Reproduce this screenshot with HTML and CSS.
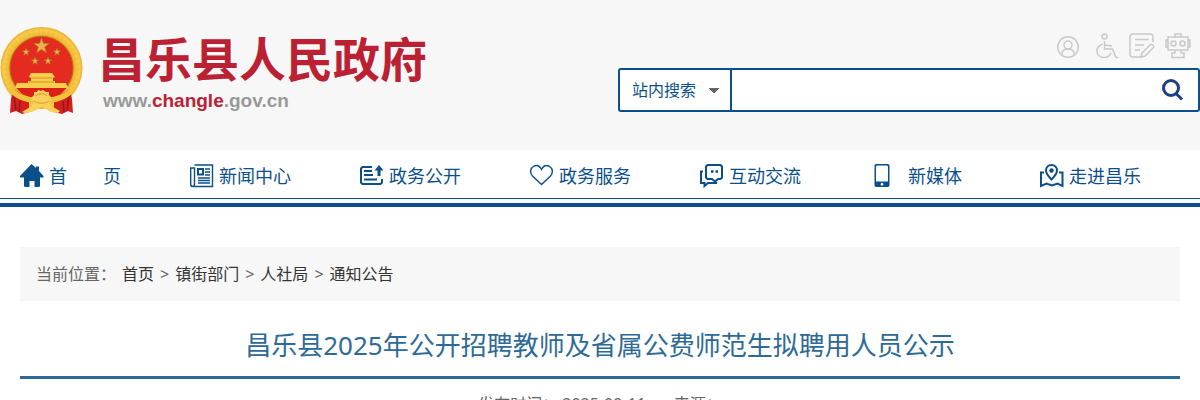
FILE: index.html
```html
<!DOCTYPE html>
<html lang="zh-CN">
<head>
    <meta charset="UTF-8">
    <meta name="viewport" content="width=device-width, initial-scale=1.0">
    <title>昌乐县2025年公开招聘教师及省属公费师范生拟聘用人员公示</title>
    <link rel="stylesheet" href="styles.css">
</head>
<body>

    <header class="header">
        <a class="logo" href="#">
            <svg class="emblem" viewBox="0 0 84 88" aria-hidden="true">
                <defs>
                    <radialGradient id="gold" cx="50%" cy="50%" r="50%">
                        <stop offset="76%" stop-color="#d9961a"/>
                        <stop offset="82%" stop-color="#f3be38"/>
                        <stop offset="92%" stop-color="#f9d04e"/>
                        <stop offset="100%" stop-color="#e9ae2c"/>
                    </radialGradient>
                    <polygon id="star" points="0,-10 2.4,-3.1 9.5,-3.1 3.8,1.2 5.9,8.1 0,4 -5.9,8.1 -3.8,1.2 -9.5,-3.1 -2.4,-3.1"/>
                </defs>
                <circle cx="41.500" cy="41" r="41" fill="url(#gold)"/>
                <circle cx="41.500" cy="41" r="36" fill="none" stroke="#e2a62b" stroke-width="4" stroke-dasharray="3 2" opacity=".2"/>
                <circle cx="41.500" cy="41" r="31.500" fill="#e52b20" stroke="#b9641a"/>
                <path d="M16 60h51c-6 9-15 12-25.500 12S22 69 16 60z" fill="#dc2018"/>
                <g fill="#e8b04a" stroke="#a95c18" stroke-width=".6">
                    <use href="#star" transform="translate(41.500 19) scale(.85)"/>
                    <use href="#star" transform="translate(26 25) scale(.42)" stroke-width="1.200"/>
                    <use href="#star" transform="translate(57 25) scale(.42)" stroke-width="1.200"/>
                    <use href="#star" transform="translate(35 34) scale(.42)" stroke-width="1.200"/>
                    <use href="#star" transform="translate(48 34) scale(.42)" stroke-width="1.200"/>
                </g>
                <path d="M31 46h21l3 4-2 1v3h2v2h11l2 5H15l2-5h11v-2h3v-3l-2-1z" fill="#f8cf4c"/>
                <path d="M31 51h21M29 55h25" stroke="#d98c22" stroke-width="1"/>
                <path d="M13 62L11 72 10 86l6-2 6 3 7-2v-14zM70 62l2 10 1 14-5-2-6 3-8-2v-14z" fill="#d3201d"/>
                <path d="M14 69l2 14M20 74l-1 11M63 74l1 11M69 69l-2 14" stroke="#99131a" stroke-width="1.500"/>
                <path d="M10 59c8 8 17 11 26 12l-2 5C22 75 13 70 7 63zM73 59c-8 8-17 11-26 12l2 5c12-1 21-6 27-13z" fill="#f4c13a"/>
                <path d="M34 65l3 0 1-2 3 1 2-1 3 2 3 0 0 3 3 3-3 4 2 4 9 5-2 2c-7 0-11-3-16-7-5 4-10 7-17 7l-3-1 10-6 2-4-3-4 3-3z" fill="#f9d15a"/>
                <path d="M36 69c2-3 9-3 11 0M34 74c4 3 11 3 15 0" stroke="#d7972a" fill="none"/>
            </svg>
            <span class="logo-text">
                <strong class="logo-name">昌乐县人民政府</strong>
                <span class="logo-url">www.<b>changle</b>.gov.cn</span>
            </span>
        </a>

        <div class="tools">
            <div class="tool-links">
                <a href="#" aria-label="个人中心">
                    <svg class="tool-icon" viewBox="0 0 26 26">
                        <circle cx="11" cy="14" r="10.300"/>
                        <circle cx="11" cy="12" r="4"/>
                        <path d="M5 21c0-3 2-5 6-5s6 2 6 5"/>
                    </svg>
                </a>
                <a href="#" aria-label="无障碍">
                    <svg class="tool-icon" viewBox="0 0 26 26">
                        <circle cx="11.500" cy="3.500" r="2.500"/>
                        <path d="M11.500 8v8h8l3.500 8.500h2.500M12 12l7 1M9.500 11C6 12.500 4 15 4 18c0 4 3 6.500 7 6.500 3.500 0 6-2 7-5"/>
                    </svg>
                </a>
                <a href="#" aria-label="留言">
                    <svg class="tool-icon" viewBox="0 0 26 26">
                        <path d="M24 9V4c0-2-1-3-3-3H4C2 1 1 2 1 4v17c0 2 1 3 3 3h9M6 6.500h14M6 12h9M6 17h5"/>
                        <path d="M13 20l8-8c1-1 2-1 3 0s1 2 0 3l-8 8-4 1z"/>
                    </svg>
                </a>
                <a href="#" aria-label="智能问答">
                    <svg class="tool-icon" viewBox="0 0 26 26">
                        <path d="M10 4V1h6v3M3 4h20v13H3zM3 7H1v7h2M23 7h2v7h-2M10 17v3H7v4.500h12V20h-3v-3"/>
                        <circle cx="8.500" cy="10.500" r="2.500"/>
                        <circle cx="17.500" cy="10.500" r="2.500"/>
                    </svg>
                </a>
            </div>

            <form class="search">
                <select class="search-type" aria-label="搜索范围">
                    <option>站内搜索</option>
                </select>
                <input class="search-input" type="text" aria-label="搜索">
                <button class="search-btn" type="button" aria-label="搜索">
                    <svg viewBox="0 0 24 24" aria-hidden="true">
                        <circle cx="10" cy="10" r="7.500"/>
                        <path d="M15 15.500l6 6"/>
                    </svg>
                </button>
            </form>
        </div>
    </header>

    <nav class="nav">
        <a class="nav-item" href="#">
            <svg class="nav-icon" viewBox="0 0 24 24">
                <path class="solid" d="M11.500 0L16 4V2.500h3V7l4.500 5v1.500H20V22l-1 1h-4.500v-6h-5v6H5l-1-1v-8.500H0V12z"/>
            </svg>
            <span class="nav-text">首&emsp;&emsp;页</span>
        </a>
        <a class="nav-item" href="#">
            <svg class="nav-icon thin" viewBox="0 0 24 24">
                <path d="M4.500 1h18v21.500h-20C1 22.500.7 22 .7 20V4h3.800v16c0 1.500-.5 2.500-2 2.500M15 5h5M15 8h5M15 11h5M8 14h12M8 16.500h12M8 19h12"/>
                <path d="M8 5h5v5.500H8z" stroke-width="2"/>
            </svg>
            <span class="nav-text">新闻中心</span>
        </a>
        <a class="nav-item" href="#">
            <svg class="nav-icon" viewBox="0 0 24 24">
                <path d="M12 3H2.500L1 4.500v14L2.500 20h18l1.500-1.500V15M4 7h8M4 11h9M4 15.500h13"/>
                <path class="solid" d="M19 1l4.500 5.500h-3V12h-3V6.500h-3z"/>
            </svg>
            <span class="nav-text">政务公开</span>
        </a>
        <a class="nav-item" href="#">
            <svg class="nav-icon thin" viewBox="0 0 24 24">
                <path d="M11.500 20.500L2.500 12C-.5 8.500.3 4 4 2 7.500.500 10 2.500 11.500 5.500 13 2.500 15.500.500 19 2c3.700 2 4.500 6.500 1.500 10z"/>
            </svg>
            <span class="nav-text">政务服务</span>
        </a>
        <a class="nav-item" href="#">
            <svg class="nav-icon" viewBox="0 0 24 24">
                <path d="M7.500 1h13l1.500 1.500v11L20.500 15H18l-3 2.500-3-2.500H7.500L6 13.500v-11z"/>
                <path d="M3 7.500H1V19h3.500v3L8 19h8v-1"/>
                <path d="M11 7.500h2.500M15.500 7.500H18" stroke-width="2.500"/>
            </svg>
            <span class="nav-text">互动交流</span>
        </a>
        <a class="nav-item" href="#">
            <svg class="nav-icon" viewBox="0 0 24 24">
                <path class="solid" fill-rule="evenodd" d="M6.500 0h11c1.500 0 2 .7 2 2v19c0 1.300-.5 2-2 2h-11c-1.500 0-2-.7-2-2V2c0-1.300.5-2 2-2zM6 2.500V17.500h12V2.500L17 1.500H7zM12 18.500l-1.700 1.700L12 22l1.700-1.800z"/>
            </svg>
            <span class="nav-text">新媒体</span>
        </a>
        <a class="nav-item" href="#">
            <svg class="nav-icon" viewBox="0 0 24 24">
                <path d="M4 8.500H1V22l5.500-2.500L12 21.500l5.500-2L22.500 22V8.500H19"/>
                <path d="M11.500 15.500C8 12 6 9.500 6 6.500 6 3 8.500 1 11.500 1S17 3 17 6.500c0 3-2 5.500-5.500 9z"/>
                <circle class="solid" cx="11.500" cy="6.500" r="2.200"/>
            </svg>
            <span class="nav-text">走进昌乐</span>
        </a>
    </nav>

    <main class="content">
        <div class="breadcrumb">
            <span class="breadcrumb-label">当前位置：</span>
            <a href="#">首页</a>
            <span>&gt;</span>
            <a href="#">镇街部门</a>
            <span>&gt;</span>
            <a href="#">人社局</a>
            <span>&gt;</span>
            <a href="#">通知公告</a>
        </div>
        <h1 class="title">昌乐县2025年公开招聘教师及省属公费师范生拟聘用人员公示</h1>
        <p class="meta">
            <span>发布时间： 2025-09-11</span>
            <span>来源：</span>
        </p>
    </main>

</body>
</html>
```

FILE: styles.css
```css
* {
    box-sizing: border-box;
}

html {
    scrollbar-width: none;
}

body {
    margin: 0;
    background-color: #fff;
    color: #666;
    font-family: "Noto Sans", "Noto Sans CJK SC", sans-serif;
    font-size: 16px;
}

a {
    color: inherit;
    text-decoration: none;
}

svg {
    display: block;
    fill: none;
}

/* Header */
.header {
    display: flex;
    justify-content: space-between;
    align-items: flex-start;
    min-height: 150px;
    background-color: #f7f7f7;
}

.logo {
    display: flex;
    gap: 14px;
    padding-top: 27px;
}

.emblem {
    width: 84px;
    height: 88px;
}

.logo-text {
    display: flex;
    flex-direction: column;
    padding-top: 6px;
}

.logo-name {
    color: #bb2133;
    font-size: 47px;
    font-weight: 700;
    line-height: 52px;
}

.logo-url {
    padding: 4px 0 0 5px;
    color: #999;
    font-family: "Liberation Sans", sans-serif;
    font-size: 19px;
    font-weight: 700;
    line-height: 24px;
}

.logo-url b {
    color: #bb2133;
}

.tools {
    width: 48.5%;
    padding-top: 33px;
}

.tool-links {
    display: flex;
    justify-content: flex-end;
    gap: 10px;
    height: 35px;
    padding-right: 9px;
}

.tool-icon {
    width: 26px;
    height: 26px;
    stroke: #c9c9c9;
    stroke-width: 1.5;
}

.search {
    display: flex;
    height: 44px;
    border: 2px solid #0a4f8c;
    border-radius: 3px;
    background-color: #fff;
}

.search-type {
    appearance: none;
    width: 112px;
    padding: 0 12px;
    border: none;
    border-right: 2px solid #0a4f8c;
    background-image: linear-gradient(to bottom left, #666 50%, transparent 50%),
                      linear-gradient(to bottom right, #666 50%, transparent 50%);
    background-color: transparent;
    background-position: 89px 18px, 94px 18px;
    background-size: 5px 6px;
    background-repeat: no-repeat;
    color: #0a4f8c;
    font: inherit;
}

.search-input {
    flex: 1;
    min-width: 0;
    padding: 0 10px;
    border: none;
    background: none;
    font: inherit;
    outline: none;
}

.search-btn {
    width: 50px;
    padding: 0 13px;
    border: none;
    background: none;
    cursor: pointer;
}

.search-btn svg {
    width: 24px;
    height: 24px;
    stroke: #1c3f82;
    stroke-width: 3;
}

/* Navigation */
.nav {
    display: grid;
    grid-template-columns: repeat(7, 1fr);
    gap: 30px;
    height: 57px;
    padding: 0 20px;
    border-bottom: 4px solid #0a4f8c;
    background: linear-gradient(#0a4f8c, #0a4f8c) 0 48px / 100% 1px no-repeat;
}

.nav-item {
    display: flex;
    gap: 5px;
    padding-top: 14px;
    color: #0a4f8c;
    font-size: 18px;
    line-height: 24px;
    white-space: nowrap;
}

.nav-icon {
    flex: none;
    width: 24px;
    height: 24px;
    stroke: #0a4f8c;
    stroke-width: 2;
}

.nav-icon.thin {
    stroke-width: 1.4;
}

.nav-icon .solid {
    fill: #0a4f8c;
    stroke: none;
}

.nav-text {
    min-width: 72px;
    text-align: center;
}

/* Article */
.content {
    padding: 40px 20px 0;
}

.breadcrumb {
    display: flex;
    gap: 6px;
    padding: 0 16px;
    background-color: #f7f7f7;
    line-height: 54px;
}

.breadcrumb a {
    color: #333;
}

.title {
    margin: 0;
    padding: 25px 0 12px;
    border-bottom: 3px solid #2e6a97;
    color: #2e6a97;
    font-size: 26px;
    font-weight: 400;
    line-height: 38px;
    text-align: center;
}

.meta {
    display: flex;
    justify-content: center;
    gap: 28px;
    margin: 0;
    padding-top: 13px;
    line-height: 24px;
}
```
